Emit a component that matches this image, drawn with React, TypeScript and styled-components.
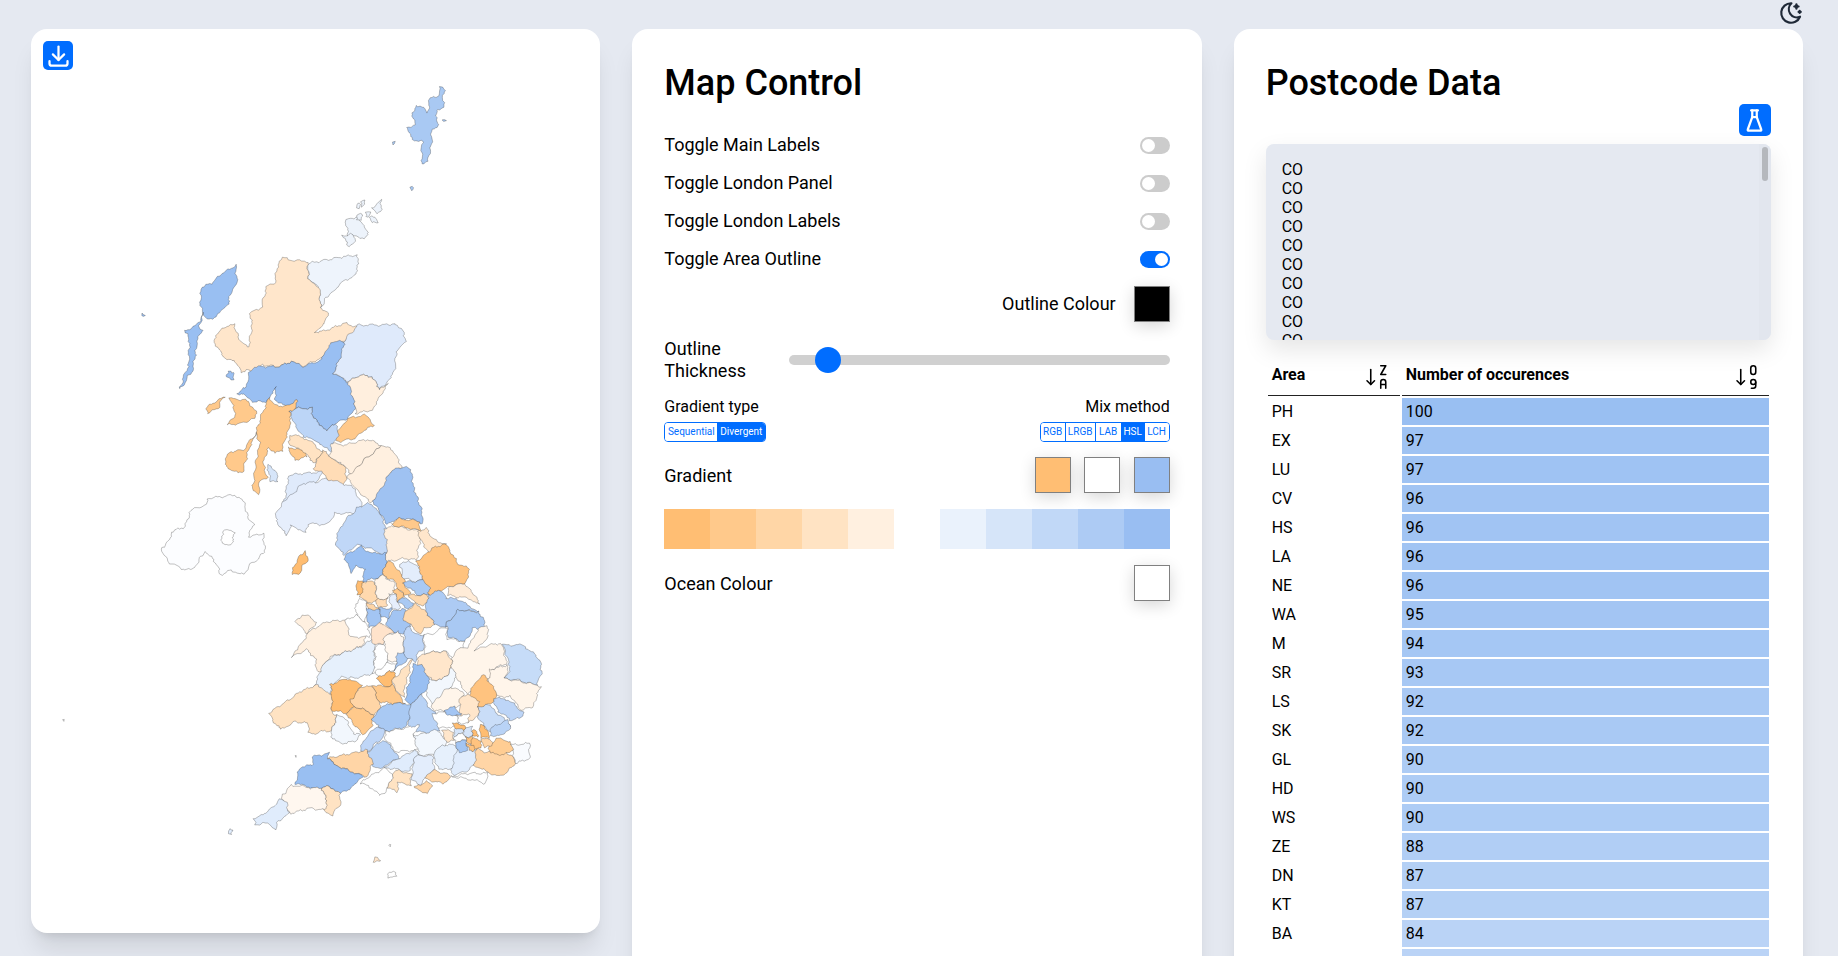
import React from "react";
import styled, { createGlobalStyle } from "styled-components";
import {
  TbDownload,
  TbFlask,
  TbMoonStars,
  TbSortDescendingLetters,
  TbSortAscendingNumbers,
} from "react-icons/tb";

const GlobalStyle = createGlobalStyle`
  html, body {
    margin: 0;
    height: 100%;
    overflow: hidden;
    background: #e5e9f1;
    font-family: Roboto, "Liberation Sans", sans-serif;
    color: #000;
  }
`;

const Page = styled.div`
  height: 100vh;
  overflow: hidden;
  display: flex;
  flex-direction: column;
`;

const TopBar = styled.header`
  height: 29px;
  flex-shrink: 0;
  display: flex;
  justify-content: flex-end;
  padding-right: 34px;
  color: #1f2937;
  font-size: 26px;
`;

const Columns = styled.div`
  display: grid;
  grid-template-columns: repeat(3, 1fr);
  gap: 32px;
  align-items: start;
  padding: 0 35px 0 31px;
`;

const Card = styled.section`
  position: relative;
  background: #fff;
  border-radius: 16px;
  box-sizing: border-box;
  box-shadow: 0 20px 25px -5px rgba(0, 0, 0, 0.1), 0 8px 10px -6px rgba(0, 0, 0, 0.1);
`;

const MapCard = styled(Card)`
  height: 904px;
  overflow: hidden;
`;

const PanelCard = styled(Card)`
  padding: 33px 32px 32px;
  min-height: 1000px;
`;

const MapSvg = styled.svg`
  display: block;
  width: 100%;
  height: 100%;
`;

const MapArea = styled.polygon`
  stroke: rgba(40, 40, 40, 0.42);
  stroke-width: 0.7px;
  stroke-linejoin: round;
`;

const IconButton = styled.button`
  width: 30px;
  height: 29px;
  padding: 0;
  border: 0;
  border-radius: 5px;
  background: #006dff;
  color: #fff;
  display: flex;
  align-items: center;
  justify-content: center;
  font-size: 27px;
`;

const DownloadButton = styled(IconButton)`
  position: absolute;
  top: 12px;
  left: 12px;
`;

const FlaskButton = styled(IconButton)`
  width: 32px;
  height: 32px;
  margin-left: auto;
`;

const Title = styled.h1`
  margin: 0;
  font-size: 36px;
  line-height: 42px;
  font-weight: 500;
`;

const ControlList = styled.div`
  margin-top: 22px;
  display: flex;
  flex-direction: column;
`;

const ToggleRow = styled.div`
  height: 38px;
  display: flex;
  align-items: center;
  justify-content: space-between;
  font-size: 18px;
`;

const RaisedLabel = styled.span`
  margin-bottom: 2px;
`;

const ToggleTrack = styled.span<{ $on?: boolean }>`
  width: 30px;
  height: 17px;
  border-radius: 9px;
  box-sizing: border-box;
  padding: 2px;
  display: flex;
  justify-content: ${(p) => (p.$on ? "flex-end" : "flex-start")};
  background: ${(p) => (p.$on ? "#006dff" : "#cccccc")};
`;

const ToggleThumb = styled.span`
  width: 13px;
  height: 13px;
  border-radius: 50%;
  background: #fff;
`;

const ColourRow = styled.div<{ $end?: boolean }>`
  display: flex;
  align-items: center;
  justify-content: ${(p) => (p.$end ? "flex-end" : "space-between")};
  gap: 18px;
  font-size: 18px;
  margin-top: 16px;
`;

const OutlineRow = styled(ColourRow)`
  margin-top: 8px;
`;

const GradientRow = styled(ColourRow)`
  margin-top: 15px;
`;

const SwatchGroup = styled.div`
  display: flex;
  gap: 13.5px;
`;

const Swatch = styled.div<{ $colour: string }>`
  width: 36px;
  height: 36px;
  box-sizing: border-box;
  border: 1px solid #808080;
  background: ${(p) => p.$colour};
  box-shadow: 0 4px 16px rgba(0, 0, 0, 0.16);
`;

const SliderRow = styled.div`
  display: grid;
  grid-template-columns: 125px 1fr;
  align-items: center;
  margin-top: 16px;
`;

const SliderLabel = styled.div`
  font-size: 18px;
  line-height: 22px;
  width: 100px;
`;

const Slider = styled.input`
  appearance: none;
  display: block;
  width: 100%;
  height: 10px;
  margin: 0;
  border-radius: 5px;
  background: #d0d0d0;

  &::-webkit-slider-thumb {
    appearance: none;
    width: 26px;
    height: 26px;
    border-radius: 50%;
    background: #006dff;
  }
`;

const ModeRow = styled.div`
  display: flex;
  justify-content: space-between;
  margin-top: 15px;
`;

const ModeColumn = styled.div<{ $right?: boolean }>`
  display: flex;
  flex-direction: column;
  align-items: ${(p) => (p.$right ? "flex-end" : "flex-start")};
  gap: 6px;
  font-size: 16px;
  line-height: 19px;
`;

const Segments = styled.div`
  display: flex;
  height: 20px;
  box-sizing: border-box;
  border: 1px solid #006dff;
  border-radius: 4px;
  overflow: hidden;
`;

const Segment = styled.span<{ $active?: boolean; $width: number; $divider?: boolean }>`
  width: ${(p) => p.$width}px;
  box-sizing: border-box;
  display: flex;
  align-items: center;
  justify-content: center;
  font-size: 10px;
  line-height: 18px;
  color: ${(p) => (p.$active ? "#fff" : "#006dff")};
  background: ${(p) => (p.$active ? "#006dff" : "#fff")};
  border-right: ${(p) => (p.$divider ? "1px solid #006dff" : "0")};
`;

const Palette = styled.div`
  display: grid;
  grid-template-columns: repeat(11, 1fr);
  height: 40px;
  margin-top: 16px;
`;

const PaletteCell = styled.div<{ $colour: string }>`
  background: ${(p) => p.$colour};
`;

const CodeBox = styled.div`
  margin-top: 8px;
  height: 196px;
  border-radius: 8px;
  background: #e5e9f1;
  box-shadow: 0 10px 25px rgba(0, 0, 0, 0.1);
  display: flex;
  overflow: hidden;
`;

const CodeList = styled.pre`
  flex: 1;
  margin: 0;
  padding: 16px;
  font: 16px/19px Roboto, "Liberation Sans", sans-serif;
  overflow: hidden;
`;

const FakeScrollbar = styled.div`
  width: 12px;
  box-sizing: border-box;
  padding: 3px 3px 0;
  background: #e2e6ee;
`;

const ScrollThumb = styled.div`
  height: 34px;
  border-radius: 3px;
  background: #b5b8bd;
`;

const DataTable = styled.table`
  width: 100%;
  margin-top: 21px;
  table-layout: fixed;
  border-spacing: 2px;
  font-size: 16px;
  line-height: 19px;
`;

const Th = styled.th<{ $narrow?: boolean }>`
  padding: 2px 4px 11px;
  border-bottom: 1px solid #222;
  width: ${(p) => (p.$narrow ? "124px" : "auto")};
`;

const ThInner = styled.div`
  display: flex;
  align-items: center;
  justify-content: space-between;
  text-align: left;
  font-weight: 700;
`;

const SortIcon = styled.span<{ $inset: number }>`
  display: flex;
  font-size: 30px;
  margin: -3px ${(p) => p.$inset}px -8px 0;
`;

const Td = styled.td`
  padding: 4px;
`;

const ValueTd = styled(Td)<{ $value: number }>`
  background: ${(p) => {
    const t = (p.$value - 50) / 50;
    const mix = (c: number) => Math.round(255 + (c - 255) * t);
    return `rgb(${mix(153)}, ${mix(191)}, ${mix(242)})`;
  }};
`;

type AreaDef = [string, string];

// postcode areas, traced in the coordinates of each crop
const north: AreaDef[] = [
  ["#a9c9f3", "1110,172 1120,178 1116,205 1118,230 1105,240 1095,258 1105,285 1085,300 1085,340 1075,395 1060,400 1058,360 1060,335 1040,330 1025,315 1020,292 1040,285 1032,250 1045,225 1062,235 1075,250 1080,205 1100,200"],
  ["#a9c9f3", "980,335 988,335 988,343 982,343"],
  ["#a9c9f3", "1028,473 1034,473 1033,482 1028,481"],
  ["#a9c9f3", "1116,268 1126,268 1120,274"],
  ["#edf3fb", "852,570 885,560 900,590 915,605 905,625 880,620 860,615"],
  ["#edf3fb", "845,618 870,612 880,640 860,648"],
  ["#edf3fb", "882,522 890,520 892,535 884,535"],
  ["#edf3fb", "893,512 903,510 900,528 895,528"],
  ["#edf3fb", "905,545 918,548 918,560 908,558"],
  ["#edf3fb", "925,535 950,510 948,540 935,548"],
  ["#edf3fb", "920,562 935,562 938,580 922,578"],
  ["#edf3fb", "880,555 895,552 898,572 885,570"],
  ["#eef4fc", "752,700 800,690 850,680 885,675 885,715 878,735 840,760 800,805 785,830 780,770 752,745"],
  ["#ffe6cb", "680,682 705,690 750,695 752,745 782,775 785,830 805,850 795,880 770,905 790,905 850,880 885,890 870,915 845,935 815,945 790,985 750,1000 730,1010 710,995 670,1010 625,1005 605,1030 590,1020 570,1025 560,1000 530,985 510,960 495,935 510,905 535,885 550,885 565,930 590,950 600,890 595,850 625,830 640,770 660,760 668,715"],
  ["#99bff2", "555,705 560,760 540,790 535,825 500,860 475,870 460,830 462,770 490,760 520,730"],
  ["#99bff2", "470,850 455,885 465,900 450,940 445,990 435,1030 420,1050 405,1080 415,1040 428,1010 430,930 418,905 450,885"],
  ["#99bff2", "300,853 312,855 308,862"],
  ["#99bff2", "535,1020 552,1030 550,1048 530,1040"],
  ["#99bff2", "815,935 848,935 848,960 820,1030 865,1060 880,1130 860,1165 825,1180 800,1200 765,1165 760,1135 720,1135 690,1130 660,1105 665,1070 640,1115 600,1115 580,1095 555,1090 585,1070 590,1035 605,1010 670,1010 710,995 735,1010 785,990"],
  ["#dfeafb", "848,935 885,885 950,885 985,882 1010,905 1015,935 990,965 985,1020 970,1050 945,1080 925,1040 890,1035 860,1055 820,1030 845,960"],
  ["#ffefde", "860,1055 890,1035 925,1040 945,1080 968,1060 945,1100 925,1140 880,1150 880,1130"],
  ["#ffc98b", "825,1210 860,1165 905,1155 932,1185 900,1200 880,1225 835,1235 820,1230"],
  ["#bcd5f7", "700,1145 720,1135 760,1135 765,1165 800,1200 825,1180 835,1210 810,1265 770,1230 740,1220 715,1185"],
  ["#ffc98b", "645,1105 660,1125 690,1130 720,1110 720,1135 700,1145 705,1170 695,1210 680,1260 660,1270 645,1250 630,1300 640,1340 620,1355 618,1390 600,1385 610,1300 620,1240 610,1210 620,1170"],
  ["#ffc98b", "540,1105 580,1110 610,1140 610,1165 570,1180 535,1185 555,1150"],
  ["#ffc98b", "475,1135 525,1100 510,1130 480,1150"],
  ["#ffc98b", "525,1300 540,1265 575,1260 610,1210 590,1260 575,1325 545,1325"],
  ["#ffc98b", "695,1255 720,1255 745,1265 745,1280 715,1290"],
  ["#ffe3c3", "700,1215 735,1220 770,1245 790,1265 770,1300 745,1270 700,1240"],
  ["#ffdcb6", "790,1260 810,1280 850,1310 855,1345 830,1385 800,1340 765,1315"],
  ["#fff0e0", "815,1240 850,1245 910,1228 950,1245 915,1280 885,1310 870,1335 840,1300 810,1280"],
  ["#fff0e0", "950,1245 985,1265 1005,1310 975,1325 950,1385 920,1420 855,1345 885,1310 915,1280"],
  ["#d6e5f9", "640,1305 665,1320 670,1355 650,1355"],
];

const borders: AreaDef[] = [
  ["#fcfdff", "352,205 380,180 380,155 420,140 435,90 475,75 480,55 550,45 575,60 590,120 605,130 590,170 630,160 635,215 600,250 575,285 545,270 515,285 505,255 475,215 455,240 440,270 405,265 375,245"],
  ["#fff", "520,150 552,155 545,195 518,190"],
  ["#ffbd71", "705,285 720,240 745,212 750,240 725,280"],
  ["#dfeafb", "700,-15 790,-25 770,15 730,45 720,75 680,90 690,45"],
  ["#e6eefc", "665,95 690,60 740,10 780,5 800,-5 870,20 900,75 885,100 825,100 800,135 750,130 745,160 705,135 695,165 665,125"],
  ["#9fc2f2", "975,-30 1010,-40 1030,-30 1035,20 1060,100 1060,130 1020,115 985,120 965,135 935,75 925,60 950,25"],
  ["#c0d7f7", "915,70 945,95 975,180 960,230 920,205 880,195 850,225 825,190 835,150 860,110 885,85"],
  ["#ffc98b", "978,132 1000,115 1050,125 1058,155 1020,142 985,140"],
  ["#ffefde", "955,145 985,138 1060,155 1048,210 1045,240 1010,235 960,245 965,195"],
  ["#ffe6cb", "1045,155 1070,145 1085,175 1125,195 1085,225 1060,190"],
  ["#fff0e0", "715,425 735,405 755,410 775,425 750,460"],
  ["#fff0e0", "855,420 905,470 905,490 870,510 810,530 785,570 775,575 770,530 745,510 705,530 735,490 750,460 775,440 800,425"],
  ["#e6f0fc", "775,600 785,565 815,530 905,495 930,470 930,580 880,595 840,590 812,625 810,650 765,630"],
  ["#e0ecfc", "538,1050 548,1050 545,1065 538,1062"],
  ["#fff", "965,1175 990,1178 990,1192 970,1190"],
  ["#ffe6cb", "925,1145 935,1132 945,1145"],
  ["#fff", "968,1095 975,1090 973,1097"],
  ["#fff", "86,719 91,719 89,723"],
  ["#fff", "714,826 718,826 717,834"],
];

const midlands: AreaDef[] = [
  ["#99bff2", "118,70 150,48 185,70 228,70 228,95 215,135 195,145 155,155 165,120 140,105 120,130 118,105 100,85"],
  ["#ffc37f", "320,95 365,55 405,43 445,100 480,120 465,160 420,170 385,185 360,198 335,150"],
  ["#ffecd8", "420,170 465,160 485,185 510,225 475,205 410,195"],
  ["#ffc98b", "228,95 250,100 280,140 285,165 300,190 280,195 262,175 250,150 215,135"],
  ["#e3edfc", "270,105 295,90 330,120 335,150 310,155 280,145"],
  ["#a9c9f3", "275,155 310,155 340,150 358,170 355,195 325,195 295,175"],
  ["#ffd9ae", "155,155 195,155 200,210 170,220 150,200"],
  ["#ffbd71", "140,155 158,155 155,195 140,192"],
  ["#fff5ea", "195,145 215,135 250,155 255,180 230,205 200,210"],
  ["#ffc98b", "250,180 262,178 285,200 265,215"],
  ["#fff", "135,225 150,205 170,222 170,240 165,275 140,260"],
  ["#ffdcb6", "195,210 230,205 232,225 205,235"],
  ["#ffd5a6", "168,222 190,220 205,240 180,245"],
  ["#e6eefc", "235,195 255,190 270,235 245,240"],
  ["#a9c9f3", "265,215 290,200 310,225 290,238"],
  ["#ffd9ae", "295,195 350,195 355,215 340,225 315,222"],
  ["#a3c5f3", "168,238 205,238 215,260 200,290 175,290"],
  ["#a3c5f3", "205,235 245,235 235,265 215,262"],
  ["#a3c5f3", "230,268 255,240 285,238 305,280 295,290 280,315 250,305 228,285"],
  ["#ffd9ae", "278,255 315,222 345,240 375,285 345,295 330,310 310,295 278,265"],
  ["#adcbf4", "345,240 355,195 395,180 410,205 440,205 505,245 445,240 420,270 405,290 375,285"],
  ["#a9c9f3", "405,290 420,270 445,238 480,245 505,245 525,280 525,300 490,295 465,335 415,322 410,290"],
  ["#ffe3cb", "180,310 205,275 228,290 250,305 225,325 215,345 190,340"],
  ["#fff7ef", "222,320 265,305 282,335 275,400 235,390 222,365"],
  ["#fff", "105,270 135,255 165,275 180,305 175,320 120,322"],
  ["#fff", "195,345 225,345 235,395 220,410 200,430 188,430 195,390"],
  ["#fff", "195,425 230,400 260,400 255,420 240,425 205,445"],
  ["#a9c9f3", "262,370 280,365 295,385 255,420"],
  ["#bfd6f7", "285,290 298,290 310,310 340,315 340,360 320,375 315,395 290,385 280,365"],
  ["#fff", "340,315 370,310 395,290 410,295 410,325 465,335 435,385 405,365 375,365 345,370"],
  ["#ffe6cb", "320,385 345,370 375,365 405,365 425,390 425,415 395,450 365,450 335,430"],
  ["#fff5ea", "425,385 450,350 470,355 510,290 530,290 535,320 495,360 540,345 575,340 590,400 545,420 535,460 470,490 425,420"],
  ["#c6dcf8", "578,345 640,345 690,390 695,430 680,465 620,450 585,445 600,410"],
  ["#fff5ea", "540,420 595,405 585,445 680,465 690,470 670,530 635,540 600,500 560,500 535,460"],
  ["#ffc37f", "480,480 520,430 560,490 545,520 510,535 480,500"],
  ["#f2f7fd", "345,450 365,450 395,450 425,415 440,440 415,480 380,520 365,520 345,480"],
  ["#fff5ea", "365,520 420,470 445,480 460,490 450,520 415,545 370,540"],
  ["#ffe6cb", "448,510 470,490 505,515 505,555 475,580 450,560"],
  ["#c9ddf8", "505,530 535,525 575,560 600,590 580,605 540,605 505,570"],
  ["#bdd5f7", "548,505 585,505 640,545 630,565 600,570 565,545"],
  ["#99bff2", "312,400 335,405 360,460 330,500 300,525 285,505"],
  ["#ffe3c3", "245,450 305,390 285,470 280,500 255,480"],
  ["#ffbd71", "195,445 240,425 255,425 245,465 225,470"],
  ["#ffc98b", "188,465 225,470 245,465 285,520 250,520 205,515"],
  ["#ffbd71", "62,465 110,445 155,465 125,510 130,530 105,550 65,540"],
  ["#ffd5a6", "120,510 155,470 190,470 205,515 215,530 190,555 165,540 130,530"],
  ["#ffc98b", "110,550 130,530 165,540 190,555 185,590 160,615 135,590"],
  ["#a9c9f3", "215,530 250,520 285,520 300,525 305,540 290,590 225,605 205,590 195,575 185,565"],
  ["#b9d3f6", "300,525 335,495 355,530 375,545 390,600 360,610 325,605 295,590"],
  ["#fff", "365,550 415,545 440,560 450,580 410,595 385,590"],
  ["#a3c5f3", "400,540 430,530 455,550 430,560 410,550"],
  ["#fff", "440,555 478,555 475,580 445,578"],
];

const south: AreaDef[] = [
  ["#ffe3c3", "55,70 100,40 150,5 200,-15 245,15 245,70 262,75 245,125 225,120 205,130 175,130 175,100 130,95 95,120 75,100 65,80"],
  ["#f2f7fd", "262,75 290,90 310,130 335,135 310,155 270,160 240,140 245,125"],
  ["#bfd6f7", "380,110 405,120 395,150 370,165 345,195 330,180 345,145"],
  ["#fff", "405,125 460,115 505,105 490,135 505,170 500,180 440,185 405,150"],
  ["#b9d3f6", "345,195 370,170 400,150 430,180 450,205 415,220 395,235 360,225"],
  ["#e0ecfc", "400,235 445,205 490,180 510,195 490,210 480,245 425,235"],
  ["#f2f7fd", "490,135 505,135 560,120 590,150 575,180 545,195 510,195 500,175"],
  ["#e6f0fc", "548,195 575,165 620,165 625,200 600,240 565,235"],
  ["#e0ecfc", "625,165 680,160 680,220 645,245 605,255 605,230"],
  ["#e3edfc", "490,205 510,195 548,200 552,240 505,285 485,270"],
  ["#fff", "600,260 650,250 715,250 705,280 650,265"],
  ["#ffd5a6", "525,265 545,240 590,250 600,265 580,280 530,270"],
  ["#ffd5a6", "490,292 525,275 550,285 530,310"],
  ["#ffe3c3", "430,250 450,240 485,255 480,285 445,278 440,305 412,295"],
  ["#fff", "330,280 355,262 400,235 430,250 415,290 390,320 370,295"],
  ["#ffd5a6", "230,205 325,185 348,180 370,222 345,262 320,250 270,232"],
  ["#99bff2", "135,280 150,230 185,225 190,200 240,190 230,205 270,232 320,250 340,262 305,290 270,310 240,290 190,295"],
  ["#ffe3c3", "215,292 240,290 270,310 270,345 245,375 220,360 230,330"],
  ["#fff7ef", "125,285 190,295 215,292 230,330 225,360 175,355 120,370 100,340 95,315"],
  ["#e0ecfc", "90,330 110,335 115,370 85,395 75,420 60,400 35,400 15,405 12,385 40,375"],
  ["#ffd5a6", "680,175 705,185 760,190 790,195 795,225 750,260 710,245 672,225"],
  ["#ffcd93", "715,165 740,145 780,155 790,175 760,195 720,190"],
  ["#f9fbfe", "785,165 838,160 838,205 795,220"],
  ["#b9d3f6", "720,115 775,90 780,120 745,140 720,135"],
  ["#ffe6cb", "575,120 610,125 610,150 590,158"],
  ["#d6e5f9", "610,115 640,105 640,130 615,140"],
  ["#fff", "610,140 640,130 650,150 615,155"],
  ["#a3c5f3", "615,155 650,150 650,185 625,185"],
  ["#d6e5f9", "640,112 665,112 668,138 645,140"],
  ["#ffbd71", "610,100 645,105 640,118 615,118"],
  ["#ffbd71", "670,120 680,118 682,140 665,140"],
  ["#ffbd71", "690,105 705,110 720,145 690,140"],
  ["#ffc37f", "645,140 665,140 670,160 650,155"],
  ["#ffc37f", "665,145 695,150 690,175 665,180"],
  ["#ffd5a6", "695,145 725,150 725,170 700,170"],
  ["#ffc37f", "650,160 670,165 672,182 655,180"],
];

const mapLayers = [
  { dx: 30, dy: 30, sx: 0.37, sy: 1 / 3, areas: north },
  { dx: 30, dy: 480, sx: 0.37, sy: 1 / 3, areas: borders },
  { dx: 310, dy: 530, sx: 1 / 3, sy: 1 / 3, areas: midlands },
  { dx: 250, dy: 690, sx: 1 / 3, sy: 1 / 3, areas: south },
];

// ruffle the traced outlines: neighbours share the field so borders stay together
const ruffle = (x: number, y: number) =>
  [
    x + 0.9 * Math.sin(y * 0.55 + x * 0.13) + 0.5 * Math.sin(y * 1.7 + x * 0.9),
    y + 0.9 * Math.sin(x * 0.5 - y * 0.17) + 0.5 * Math.sin(x * 1.9 + y * 0.7),
  ].map((v) => v.toFixed(1)).join(",");

const tracePoints = (points: string, layer: (typeof mapLayers)[number]) => {
  const pts = points.split(" ").map((p) => {
    const [x, y] = p.split(",").map(Number);
    return [layer.dx + x * layer.sx, layer.dy + y * layer.sy];
  });
  const out: string[] = [];
  pts.forEach(([x, y], i) => {
    const [nx, ny] = pts[(i + 1) % pts.length];
    const steps = Math.max(1, Math.round(Math.hypot(nx - x, ny - y) / 2));
    for (let s = 0; s < steps; s++) {
      out.push(ruffle(x + ((nx - x) * s) / steps, y + ((ny - y) * s) / steps));
    }
  });
  return out.join(" ");
};

const toggles = [
  { label: "Toggle Main Labels", on: false },
  { label: "Toggle London Panel", on: false },
  { label: "Toggle London Labels", on: false },
  { label: "Toggle Area Outline", on: true },
];

const mixMethods = [
  { label: "RGB", width: 25, divider: true },
  { label: "LRGB", width: 30, divider: true },
  { label: "LAB", width: 25 },
  { label: "HSL", width: 24, active: true },
  { label: "LCH", width: 24 },
];

const paletteColours = [
  "#ffbe73", "#ffc98b", "#ffd6a6", "#ffe3c3", "#fff0e0", "#ffffff",
  "#eaf2fc", "#d6e5f9", "#c1d8f7", "#adcbf4", "#99bef2",
];

const rows: [string, number][] = [
  ["PH", 100], ["EX", 97], ["LU", 97], ["CV", 96], ["HS", 96], ["LA", 96], ["NE", 96],
  ["WA", 95], ["M", 94], ["SR", 93], ["LS", 92], ["SK", 92], ["GL", 90], ["HD", 90],
  ["WS", 90], ["ZE", 88], ["DN", 87], ["KT", 87], ["BA", 84], ["LN", 84],
];

export default function App() {
  return (
    <Page>
      <GlobalStyle />
      <TopBar>
        <TbMoonStars />
      </TopBar>
      <Columns>
        <MapCard>
          <DownloadButton aria-label="Download map">
            <TbDownload />
          </DownloadButton>
          <MapSvg viewBox="31 29 569 904">
            {mapLayers.map((layer) =>
              layer.areas.map(([fill, points]) => (
                <MapArea key={points} fill={fill} points={tracePoints(points, layer)} />
              ))
            )}
          </MapSvg>
        </MapCard>

        <PanelCard>
          <Title>Map Control</Title>
          <ControlList>
            {toggles.map((t) => (
              <ToggleRow key={t.label}>
                <RaisedLabel>{t.label}</RaisedLabel>
                <ToggleTrack $on={t.on}>
                  <ToggleThumb />
                </ToggleTrack>
              </ToggleRow>
            ))}
          </ControlList>
          <OutlineRow $end>
            <RaisedLabel>Outline Colour</RaisedLabel>
            <Swatch $colour="#000" />
          </OutlineRow>
          <SliderRow>
            <SliderLabel>Outline Thickness</SliderLabel>
            <Slider type="range" min={0} max={100} step={0.1} defaultValue={7.3} />
          </SliderRow>
          <ModeRow>
            <ModeColumn>
              Gradient type
              <Segments>
                <Segment $width={52}>Sequential</Segment>
                <Segment $width={48} $active>Divergent</Segment>
              </Segments>
            </ModeColumn>
            <ModeColumn $right>
              Mix method
              <Segments>
                {mixMethods.map((m) => (
                  <Segment key={m.label} $width={m.width} $active={m.active} $divider={m.divider}>
                    {m.label}
                  </Segment>
                ))}
              </Segments>
            </ModeColumn>
          </ModeRow>
          <GradientRow>
            Gradient
            <SwatchGroup>
              <Swatch $colour="#ffbe73" />
              <Swatch $colour="#fff" />
              <Swatch $colour="#99bef2" />
            </SwatchGroup>
          </GradientRow>
          <Palette>
            {paletteColours.map((c, i) => (
              <PaletteCell key={i} $colour={c} />
            ))}
          </Palette>
          <ColourRow>
            Ocean Colour
            <Swatch $colour="#fff" />
          </ColourRow>
        </PanelCard>

        <PanelCard>
          <Title>Postcode Data</Title>
          <FlaskButton aria-label="Sample data">
            <TbFlask />
          </FlaskButton>
          <CodeBox>
            <CodeList>{Array(11).fill("CO").join("\n")}</CodeList>
            <FakeScrollbar>
              <ScrollThumb />
            </FakeScrollbar>
          </CodeBox>
          <DataTable>
            <thead>
              <tr>
                <Th $narrow>
                  <ThInner>
                    Area
                    <SortIcon $inset={4}>
                      <TbSortDescendingLetters strokeWidth={1.25} />
                    </SortIcon>
                  </ThInner>
                </Th>
                <Th>
                  <ThInner>
                    Number of occurences
                    <SortIcon $inset={3}>
                      <TbSortAscendingNumbers strokeWidth={1.25} />
                    </SortIcon>
                  </ThInner>
                </Th>
              </tr>
            </thead>
            <tbody>
              {rows.map(([area, count]) => (
                <tr key={area}>
                  <Td>{area}</Td>
                  <ValueTd $value={count}>{count}</ValueTd>
                </tr>
              ))}
            </tbody>
          </DataTable>
        </PanelCard>
      </Columns>
    </Page>
  );
}
